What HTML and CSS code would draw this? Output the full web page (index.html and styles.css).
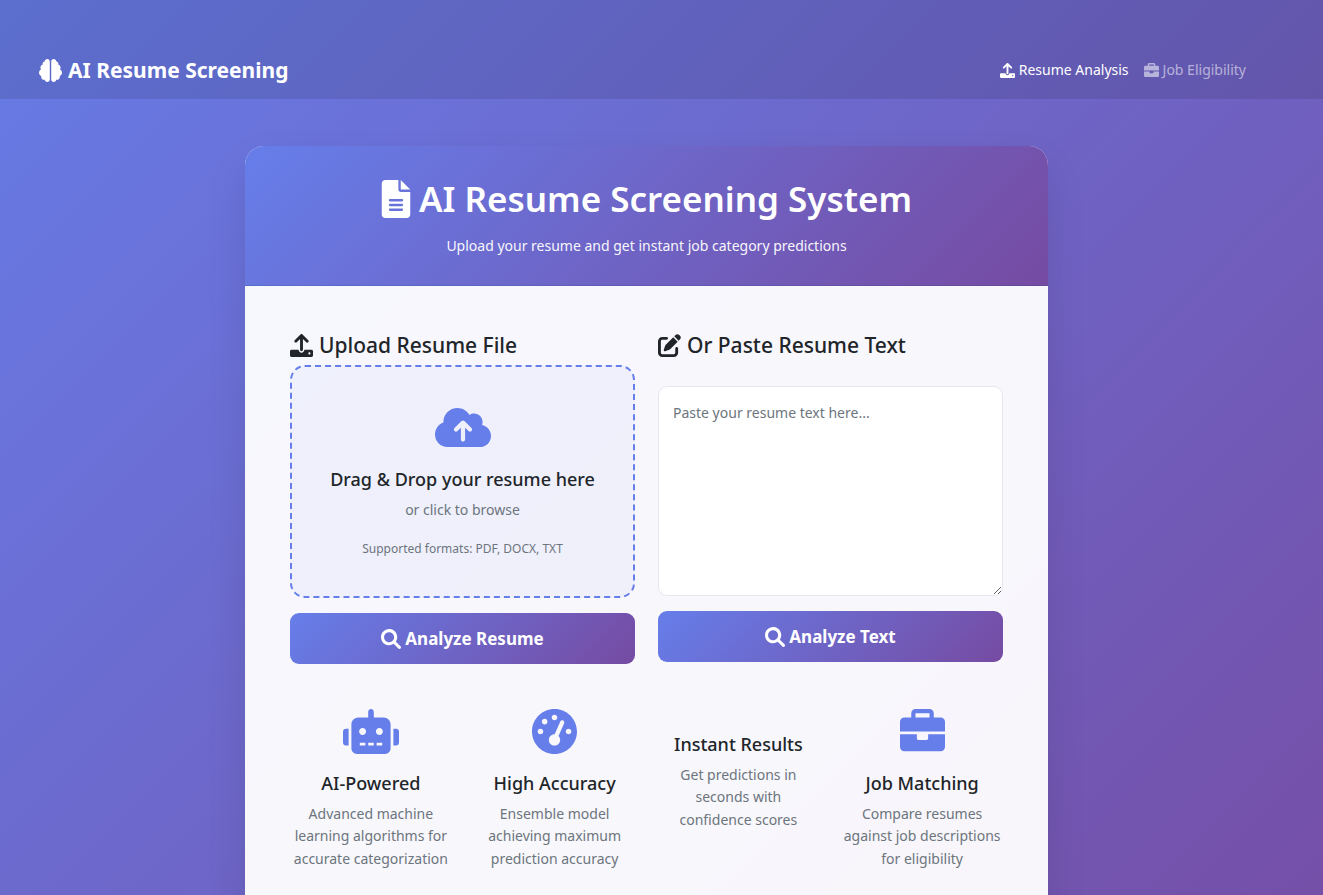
FILE: index.html
```html
<!DOCTYPE html>
<html lang="en">
<head>
<meta charset="utf-8">
<meta name="viewport" content="width=device-width, initial-scale=1">
<title>AI Resume Screening System</title>
<link rel="stylesheet" href="styles.css">
</head>
<body>
<svg class="sprite" aria-hidden="true">
  <symbol id="brain" viewBox="0 0 512 512"><path d="M184 0c30.9 0 56 25.1 56 56V456c0 30.9-25.1 56-56 56c-28.9 0-52.7-21.9-55.7-50.1c-5.2 1.4-10.7 2.1-16.3 2.1c-35.3 0-64-28.7-64-64c0-7.4 1.3-14.6 3.6-21.2C21.4 367.4 0 338.2 0 304c0-31.9 18.7-59.5 45.8-72.3C37.1 220.8 32 207 32 192c0-30.7 21.6-56.3 50.4-62.6C80.8 123.9 80 118 80 112c0-29.9 20.6-55.1 48.3-62.1C131.3 21.9 155.1 0 184 0zM328 0c28.9 0 52.6 21.9 55.7 49.9c27.8 7 48.3 32.1 48.3 62.1c0 6-.8 11.9-2.4 17.4c28.8 6.2 50.4 31.9 50.4 62.6c0 15-5.1 28.8-13.8 39.7C493.3 244.5 512 272.1 512 304c0 34.2-21.4 63.4-51.6 74.8c2.3 6.6 3.6 13.8 3.6 21.2c0 35.3-28.7 64-64 64c-5.6 0-11.1-.7-16.3-2.1c-3 28.2-26.8 50.1-55.7 50.1c-30.9 0-56-25.1-56-56V56c0-30.9 25.1-56 56-56z"/></symbol>
  <symbol id="upload" viewBox="0 0 512 512"><path d="M105.4 182.6c12.5 12.49 32.76 12.5 45.25 .001L224 109.3V352c0 17.67 14.33 32 32 32c17.67 0 32-14.33 32-32V109.3l73.38 73.38c12.49 12.49 32.75 12.49 45.25-.001c12.49-12.49 12.49-32.75 0-45.25l-128-128C272.4 3.125 264.2 0 256 0S239.6 3.125 233.4 9.375L105.4 137.4C92.88 149.9 92.88 170.1 105.4 182.6zM480 352h-160c0 35.35-28.65 64-64 64s-64-28.65-64-64H32c-17.67 0-32 14.33-32 32v96c0 17.67 14.33 32 32 32h448c17.67 0 32-14.33 32-32v-96C512 366.3 497.7 352 480 352zM432 456c-13.2 0-24-10.8-24-24c0-13.2 10.8-24 24-24s24 10.8 24 24C456 445.2 445.2 456 432 456z"/></symbol>
  <symbol id="briefcase" viewBox="0 0 512 512"><path d="M320 336c0 8.844-7.156 16-16 16h-96C199.2 352 192 344.8 192 336V288H0v144C0 457.6 22.41 480 48 480h416c25.59 0 48-22.41 48-48V288h-192V336zM464 96H384V48C384 22.41 361.6 0 336 0h-160C150.4 0 128 22.41 128 48V96H48C22.41 96 0 118.4 0 144V256h512V144C512 118.4 489.6 96 464 96zM336 96h-160V48h160V96z"/></symbol>
  <symbol id="file" viewBox="0 0 384 512"><path d="M256 0v128h128L256 0zM224 128L224 0H48C21.49 0 0 21.49 0 48v416C0 490.5 21.49 512 48 512h288c26.51 0 48-21.49 48-48V160h-127.1C238.3 160 224 145.7 224 128zM272 416h-160C103.2 416 96 408.8 96 400C96 391.2 103.2 384 112 384h160c8.836 0 16 7.162 16 16C288 408.8 280.8 416 272 416zM272 352h-160C103.2 352 96 344.8 96 336C96 327.2 103.2 320 112 320h160c8.836 0 16 7.162 16 16C288 344.8 280.8 352 272 352zM288 272C288 280.8 280.8 288 272 288h-160C103.2 288 96 280.8 96 272C96 263.2 103.2 256 112 256h160C280.8 256 288 263.2 288 272z"/></symbol>
  <symbol id="search" viewBox="0 0 512 512"><path d="M500.3 443.7l-119.7-119.7c27.22-40.41 40.65-90.9 33.46-144.7C401.8 87.79 326.8 13.32 235.2 1.723C99.01-15.51-15.51 99.01 1.724 235.2c11.6 91.64 86.08 166.7 177.6 178.9c53.8 7.189 104.3-6.236 144.7-33.46l119.7 119.7c15.62 15.62 40.95 15.62 56.57 0C515.9 484.7 515.9 459.3 500.3 443.7zM79.1 208c0-70.58 57.42-128 128-128s128 57.42 128 128c0 70.58-57.42 128-128 128S79.1 278.6 79.1 208z"/></symbol>
  <symbol id="edit" viewBox="0 0 512 512"><path d="M490.3 40.4C512.2 62.27 512.2 97.73 490.3 119.6L460.3 149.7L362.3 51.72L392.4 21.66C414.3-.2135 449.7-.2135 471.6 21.66L490.3 40.4zM172.4 241.7L339.7 74.34L437.7 172.3L270.3 339.6C264.2 345.8 256.7 350.4 248.4 353.2L159.6 382.8C150.1 385.6 141.5 383.4 135 376.1C128.6 370.5 126.4 361 129.2 352.4L158.8 263.6C161.6 255.3 166.2 247.8 172.4 241.7zM192 64C209.7 64 224 78.33 224 96C224 113.7 209.7 128 192 128H96C78.33 128 64 142.3 64 160V416C64 433.7 78.33 448 96 448H352C369.7 448 384 433.7 384 416V320C384 302.3 398.3 288 416 288C433.7 288 448 302.3 448 320V416C448 469 405 512 352 512H96C42.98 512 0 469 0 416V160C0 107 42.98 64 96 64H192z"/></symbol>
  <symbol id="cloud" viewBox="0 0 640 512"><path d="M144 480C64.5 480 0 415.5 0 336c0-62.8 40.2-116.2 96.2-135.9c-.1-2.7-.2-5.4-.2-8.1c0-88.4 71.6-160 160-160c59.3 0 111 32.2 138.7 80.2C409.9 102 428.3 96 448 96c53 0 96 43 96 96c0 12.2-2.3 23.8-6.4 34.6C596 238.4 640 290.1 640 352c0 70.7-57.3 128-128 128H144zm79-217c-9.4 9.4-9.4 24.6 0 33.9s24.6 9.4 33.9 0l39-39V392c0 13.3 10.7 24 24 24s24-10.7 24-24V257.9l39 39c9.4 9.4 24.6 9.4 33.9 0s9.4-24.6 0-33.9l-80-80c-9.4-9.4-24.6-9.4-33.9 0l-80 80z"/></symbol>
  <symbol id="robot" viewBox="0 0 640 512"><path d="M9.375 233.4C3.375 239.4 0 247.5 0 256v128c0 8.5 3.375 16.62 9.375 22.62S23.5 416 32 416h32V224H32C23.5 224 15.38 227.4 9.375 233.4zM464 96H352V32c0-17.62-14.38-32-32-32S288 14.38 288 32v64H176C131.8 96 96 131.8 96 176V448c0 35.38 28.62 64 64 64h320c35.38 0 64-28.62 64-64V176C544 131.8 508.2 96 464 96zM256 416H192v-32h64V416zM224 296C201.9 296 184 278.1 184 256S201.9 216 224 216S264 233.9 264 256S246.1 296 224 296zM352 416H288v-32h64V416zM448 416h-64v-32h64V416zM416 296c-22.12 0-40-17.88-40-40S393.9 216 416 216S456 233.9 456 256S438.1 296 416 296zM630.6 233.4C624.6 227.4 616.5 224 608 224h-32v192h32c8.5 0 16.62-3.375 22.62-9.375S640 392.5 640 384V256C640 247.5 636.6 239.4 630.6 233.4z"/></symbol>
  <symbol id="gauge" viewBox="0 0 512 512"><path fill-rule="evenodd" d="M512 256c0 141.4-114.6 256-256 256S0 397.4 0 256 114.6 0 256 0s256 114.6 256 256zM288 96c0-17.7-14.3-32-32-32s-32 14.3-32 32 14.3 32 32 32 32-14.3 32-32zM256 416c35.3 0 64-28.7 64-64 0-17.4-6.9-33.1-18.1-44.6L366 161.7c5.3-12.1-.2-26.3-12.3-31.6s-26.3 .2-31.6 12.3L257.9 288c-.6 0-1.3 0-1.9 0-35.3 0-64 28.7-64 64s28.7 64 64 64zM176 144c0-17.7-14.3-32-32-32s-32 14.3-32 32 14.3 32 32 32 32-14.3 32-32zM96 288c17.7 0 32-14.3 32-32s-14.3-32-32-32-32 14.3-32 32 14.3 32 32 32zm352-32c0-17.7-14.3-32-32-32s-32 14.3-32 32 14.3 32 32 32 32-14.3 32-32z"/></symbol>
</svg>

<header class="navbar">
  <a class="brand" href="#"><svg class="icon"><use href="#brain"/></svg>AI Resume Screening</a>
  <nav class="nav">
    <a class="nav-link active" href="#"><svg class="icon"><use href="#upload"/></svg>Resume Analysis</a>
    <a class="nav-link" href="#"><svg class="icon"><use href="#briefcase"/></svg>Job Eligibility</a>
  </nav>
</header>

<main class="page">
  <section class="card">
    <div class="card-header">
      <h1 class="title"><svg class="icon icon-file"><use href="#file"/></svg>AI Resume Screening System</h1>
      <p class="subtitle">Upload your resume and get instant job category predictions</p>
    </div>
    <div class="card-body">
      <div class="inputs">
        <form class="panel">
          <h2 class="panel-title"><svg class="icon"><use href="#upload"/></svg>Upload Resume File</h2>
          <label class="dropzone" for="resume-file">
            <svg class="icon-wide"><use href="#cloud"/></svg>
            <span class="drop-title">Drag &amp; Drop your resume here</span>
            <span class="drop-text">or click to browse</span>
            <span class="drop-note">Supported formats: PDF, DOCX, TXT</span>
          </label>
          <input class="file-input" type="file" id="resume-file" accept=".pdf,.docx,.txt">
          <button class="button" type="button"><svg class="icon"><use href="#search"/></svg>Analyze Resume</button>
        </form>
        <form class="panel">
          <h2 class="panel-title"><svg class="icon"><use href="#edit"/></svg>Or Paste Resume Text</h2>
          <textarea class="resume-text" aria-label="Resume text" placeholder="Paste your resume text here..."></textarea>
          <button class="button" type="button"><svg class="icon"><use href="#search"/></svg>Analyze Text</button>
        </form>
      </div>
      <div class="features">
        <article class="feature">
          <svg class="icon-wide"><use href="#robot"/></svg>
          <h3 class="feature-title">AI-Powered</h3>
          <p class="feature-text">Advanced machine learning algorithms for accurate categorization</p>
        </article>
        <article class="feature">
          <svg class="icon-large"><use href="#gauge"/></svg>
          <h3 class="feature-title">High Accuracy</h3>
          <p class="feature-text">Ensemble model achieving maximum prediction accuracy</p>
        </article>
        <article class="feature feature-plain">
          <h3 class="feature-title">Instant Results</h3>
          <p class="feature-text">Get predictions in seconds with confidence scores</p>
        </article>
        <article class="feature">
          <svg class="icon-large"><use href="#briefcase"/></svg>
          <h3 class="feature-title">Job Matching</h3>
          <p class="feature-text">Compare resumes against job descriptions for eligibility</p>
        </article>
      </div>
    </div>
  </section>
</main>
</body>
</html>
```
FILE: styles.css
```css
* { box-sizing: border-box; }

body {
  display: flex;
  flex-direction: column;
  min-height: 100vh;
  margin: 0;
  background: linear-gradient(135deg, #667eea -6%, #764ba2 110%);
  color: #212529;
  font-family: "Noto Sans", "Open Sans", sans-serif;
  font-size: 14px;
  line-height: 22px;
}

h1, h2, h3, p { margin: 0; }

.sprite {
  position: absolute;
  width: 0;
  height: 0;
}

.icon {
  flex: none;
  width: 1em;
  height: 1em;
  fill: currentColor;
}

.navbar {
  display: flex;
  align-items: center;
  justify-content: space-between;
  padding: 52px 77px 11px 39px;
  background: rgba(0, 0, 0, 0.1);
}

.brand {
  display: flex;
  align-items: center;
  gap: 6px;
  color: #fff;
  font-size: 21px;
  font-weight: 700;
  line-height: 36px;
  text-decoration: none;
}

.brand .icon { font-size: 23px; }

.nav {
  display: flex;
  gap: 15px;
}

.nav-link {
  display: flex;
  align-items: center;
  gap: 4px;
  color: rgba(255, 255, 255, 0.55);
  text-decoration: none;
}

.nav-link.active { color: #fff; }

.nav-link .icon { font-size: 15px; }

.page {
  display: flex;
  flex: 1;
  justify-content: center;
  padding: 47px 30px 0 0;
}

.card {
  width: 100%;
  max-width: 803px;
  border-radius: 19px 19px 0 0;
  background: rgba(255, 255, 255, 0.95);
  box-shadow: 0 20px 40px rgba(0, 0, 0, 0.1);
}

.card-header {
  padding: 30px 30px 28px;
  border-bottom: 1px solid rgba(0, 0, 0, 0.125);
  border-radius: 19px 19px 0 0;
  background: linear-gradient(135deg, #667eea 0%, #764ba2 100%);
  color: #fff;
  text-align: center;
}

.title {
  display: flex;
  align-items: center;
  justify-content: center;
  gap: 8px;
  margin-bottom: 14px;
  font-size: 35px;
  font-weight: 600;
  line-height: 45px;
}

.title .icon-file {
  width: 30px;
  height: 38px;
}

.subtitle { opacity: 0.95; }

.card-body { padding: 45px 45px 24px; }

.inputs {
  display: grid;
  grid-template-columns: 1fr 1fr;
  gap: 23px;
}

.panel {
  display: flex;
  flex-direction: column;
  align-items: stretch;
}

.panel-title {
  display: flex;
  align-items: center;
  gap: 6px;
  margin-bottom: 6px;
  font-size: 21px;
  font-weight: 500;
  line-height: 28px;
}

.panel-title .icon { font-size: 23px; }

.dropzone {
  display: flex;
  flex-direction: column;
  align-items: center;
  padding: 38px 30px 36px;
  border: 2px dashed #667eea;
  border-radius: 15px;
  background: rgba(102, 126, 234, 0.05);
  cursor: pointer;
}

.icon-wide {
  width: 56px;
  height: 45px;
  fill: #667eea;
}

.icon-large {
  width: 45px;
  height: 45px;
  fill: #667eea;
}

.drop-title {
  margin: 18px 0 9px;
  font-size: 18px;
  font-weight: 500;
}

.drop-text,
.drop-note { color: #6c757d; }

.drop-note {
  margin-top: 17px;
  font-size: 12px;
}

.file-input { display: none; }

.button {
  display: flex;
  align-items: center;
  justify-content: center;
  gap: 4px;
  height: 51px;
  margin-top: 15px;
  border: 0;
  border-radius: 9px;
  background: linear-gradient(135deg, #667eea 0%, #764ba2 100%);
  color: #fff;
  font: inherit;
  font-size: 17px;
  font-weight: 700;
  cursor: pointer;
}

.button .icon { font-size: 20px; }

.resume-text {
  height: 210px;
  margin-top: 21px;
  padding: 15px 14px;
  border: 1px solid #e6e7ee;
  border-radius: 9px;
  background: #fff;
  color: #212529;
  font: inherit;
  resize: vertical;
}

.resume-text::placeholder { color: #6c757d; }

.features {
  display: grid;
  grid-template-columns: repeat(4, 1fr);
  margin: 45px -11px 0;
}

.feature {
  display: flex;
  flex-direction: column;
  align-items: center;
  padding: 0 11px;
  text-align: center;
}

.feature-plain { padding: 6px 22px 0; }

.feature-title {
  margin: 18px 0 9px;
  font-size: 18px;
  font-weight: 500;
  line-height: 22px;
}

.feature-text {
  color: #6c757d;
  line-height: 1.6;
}
```
